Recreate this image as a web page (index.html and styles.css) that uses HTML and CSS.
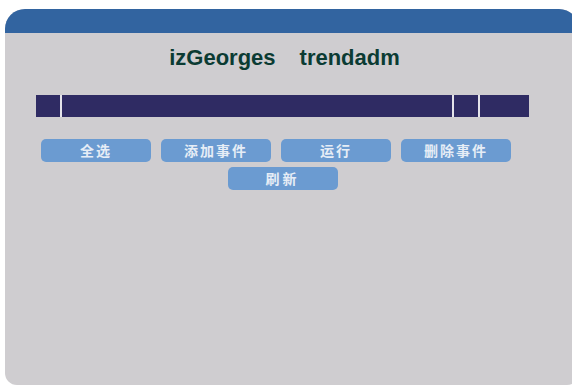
FILE: index.html
```html
<!DOCTYPE html>
<html>
<head>
	<meta http-equiv="Content-Type" content="text/html; charset=utf-8" />
	<title>事件管理</title>
	<link rel="stylesheet" href="styles.css">
</head>
<body>
	<div id="panel">
		<div class="head"></div>
		<div class="main">
			<h1 class="user"><span>izGeorges</span><span>trendadm</span></h1>
			<div class="bar">
				<i class="s1"></i><i class="s2"></i><i class="s3"></i><i class="s4"></i>
			</div>
			<ul class="btns">
				<li><a href="#">全选</a></li>
				<li><a href="#">添加事件</a></li>
				<li><a href="#">运行</a></li>
				<li><a href="#">删除事件</a></li>
			</ul>
			<ul class="btns center">
				<li><a href="#">刷新</a></li>
			</ul>
		</div>
	</div>
</body>
</html>
```

FILE: styles.css
```css
*{margin: 0;padding: 0;}
html,body{ width: 100%; height: 100%; background: #ffffff; overflow: hidden; }
ul,li{list-style: none;}
#panel{ margin: 9px 0 0 5px; width: 574px; height: 376px; background: #cfcdd0; border-radius: 20px 20px 12px 12px; overflow: hidden; }
#panel .head{ height: 24px; background: #3264a0; }
#panel .main{ padding: 14px 0 0 31px; width: 493px; }
#panel .user{ display: flex; justify-content: center; gap: 24px; padding-left: 4px; height: 22px; line-height: 22px; font-family: "Liberation Sans", Arial, sans-serif; font-size: 22px; font-weight: bold; color: #0b3b33; }
#panel .bar{ display: flex; gap: 2px; margin-top: 26px; height: 22px; background: #e4e3ea; }
#panel .bar i{ display: block; height: 100%; background: #2f2b63; }
#panel .bar .s1{ width: 24px; }
#panel .bar .s2{ width: 390px; }
#panel .bar .s3{ width: 24px; }
#panel .bar .s4{ width: 49px; }
#panel .btns{ display: flex; gap: 10px; margin-top: 22px; padding-left: 5px; }
#panel .btns.center{ justify-content: center; margin-top: 5px; padding-left: 0; }
#panel .btns li a{ display: block; width: 110px; height: 23px; line-height: 23px; background: #6b9bd1; border-radius: 5px; text-align: center; text-decoration: none; font-family: "Noto Sans CJK SC", sans-serif; font-size: 14px; font-weight: bold; letter-spacing: 2px; color: #e6edf6; }
#panel .btns.center li a{ letter-spacing: 3px; }
```
